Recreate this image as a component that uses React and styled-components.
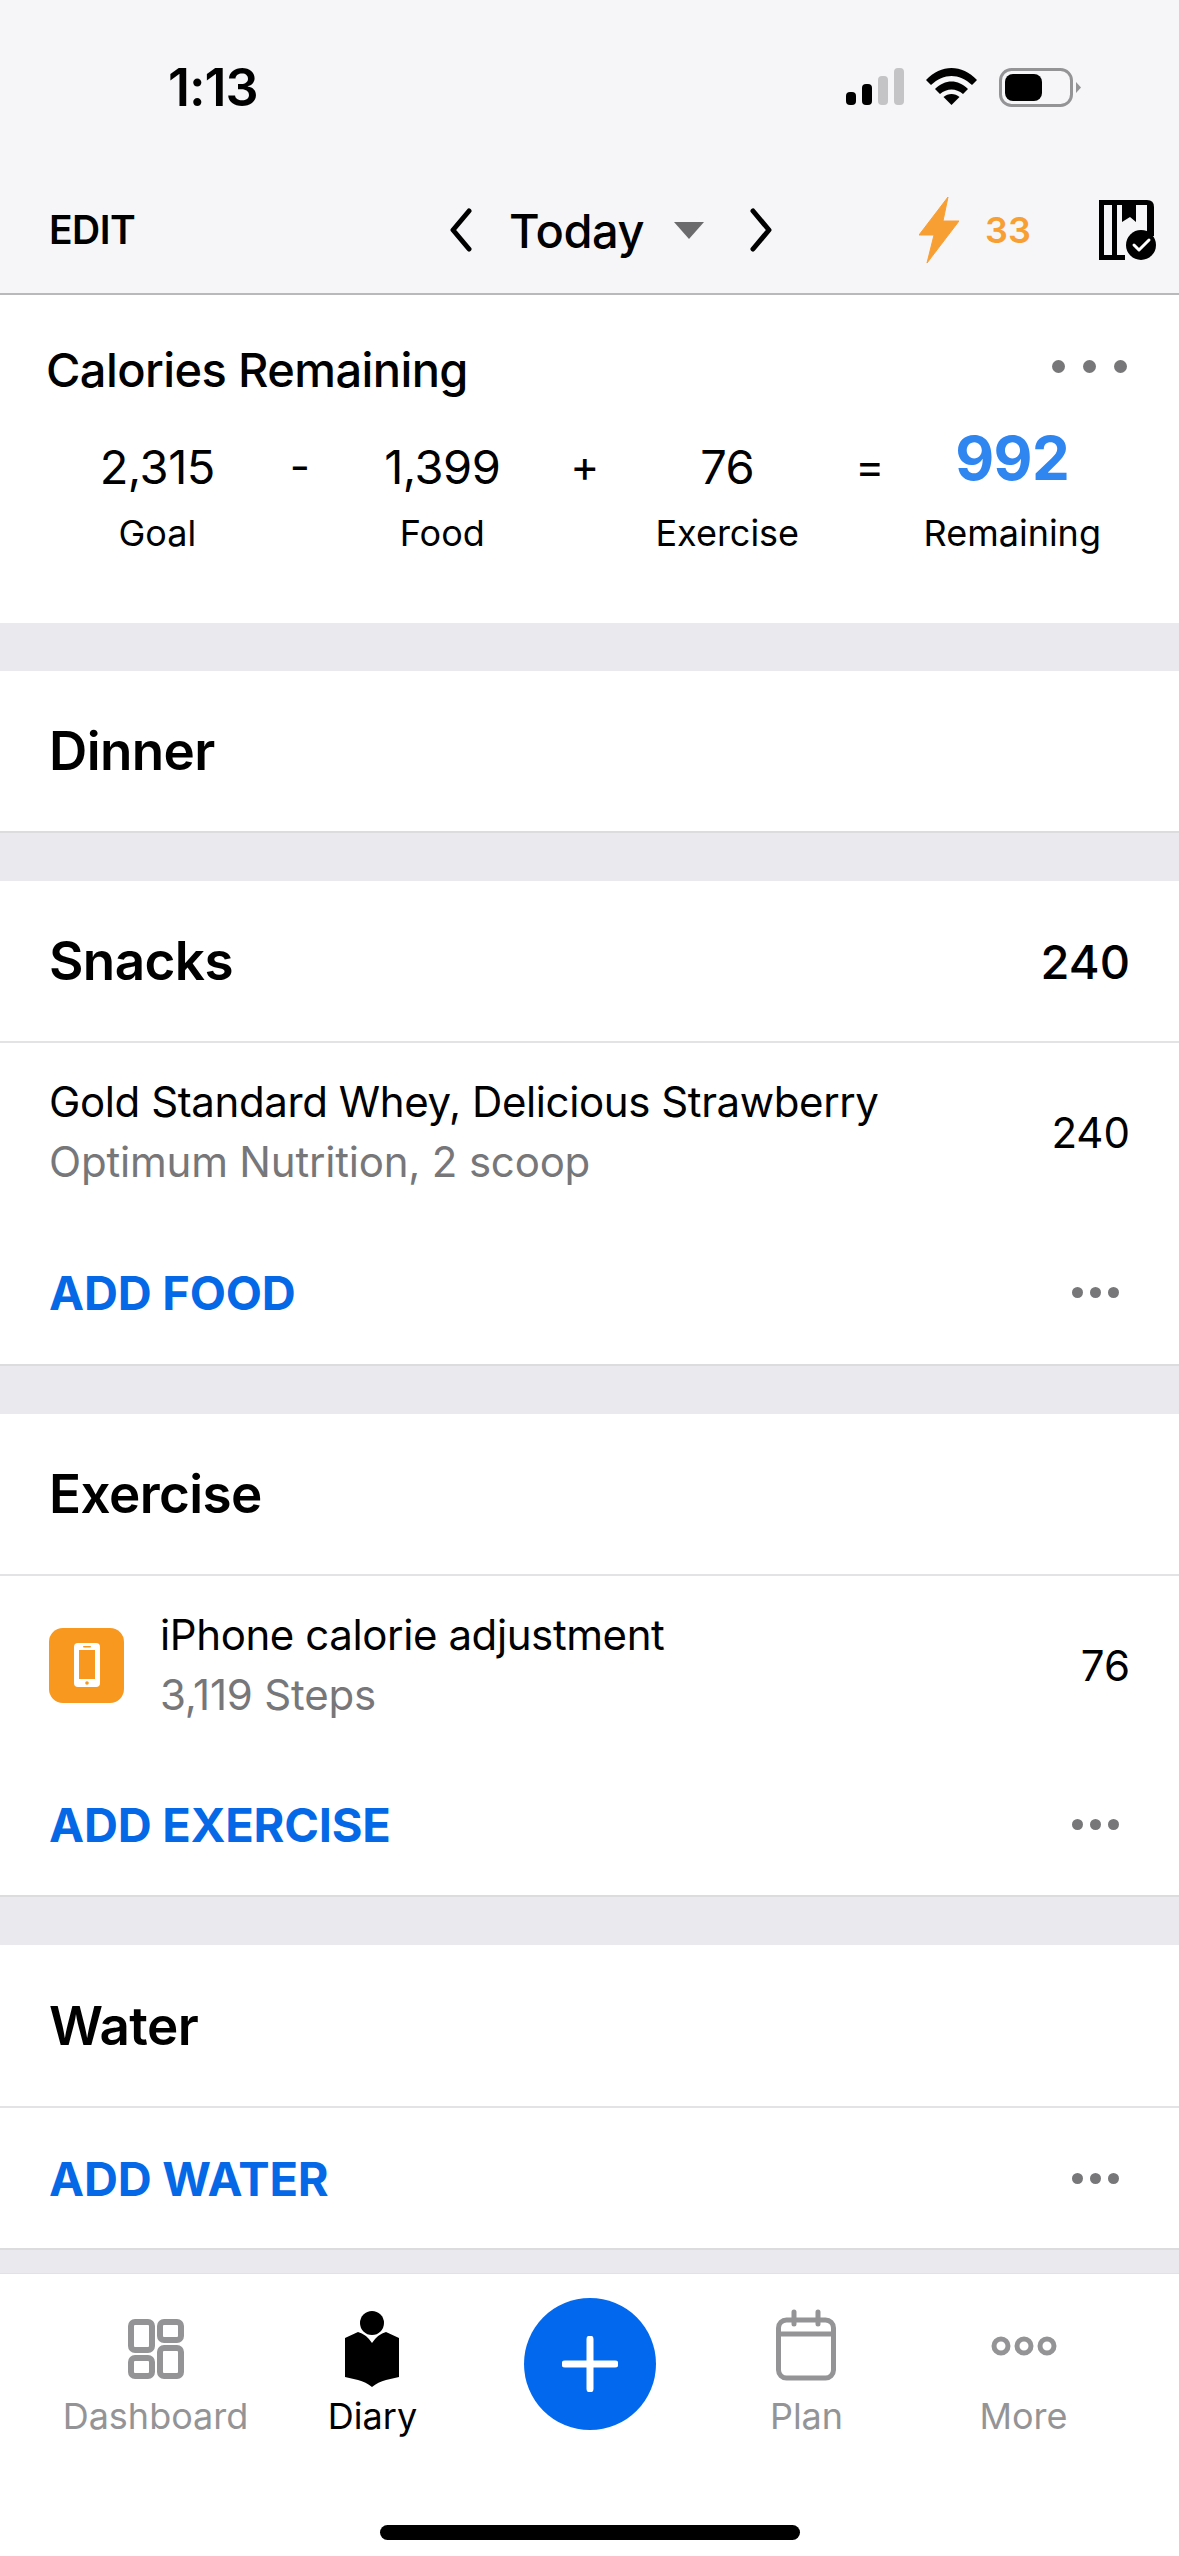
import React from 'react';
import styled, { createGlobalStyle } from 'styled-components';

const Global = createGlobalStyle`
  html, body { margin: 0; padding: 0; background: #fff; }
  body { font-family: Inter, "Liberation Sans", sans-serif; color: #000; }
  * { box-sizing: border-box; }
`;

const Screen = styled.div`
  width: 1179px;
  height: 2556px;
  display: flex;
  flex-direction: column;
  overflow: hidden;
  background: #e9e9ee;
`;

const Top = styled.header`
  height: 295px;
  flex: none;
  background: #f6f6f9;
  border-bottom: 2px solid #b9b9bc;
`;

const StatusBar = styled.div`
  height: 176px;
  padding: 60px 98px 0 168px;
  display: flex;
  justify-content: space-between;
  align-items: flex-start;
`;

const Clock = styled.div`
  font-size: 52px;
  line-height: 56px;
  font-weight: 600;
  letter-spacing: -1px;
`;

const StatusIcons = styled.div`
  display: flex;
  gap: 22px;
  padding-top: 8px;
`;

const NavBar = styled.div`
  height: 117px;
  display: grid;
  grid-template-columns: 400px 390px 1fr;
  align-items: start;
  padding-left: 49px;
`;

const Edit = styled.div`
  font-size: 39px;
  font-weight: 600;
  line-height: 108px;
  letter-spacing: -0.5px;
`;

const DatePicker = styled.div`
  display: flex;
  align-items: center;
  height: 108px;
`;

const Today = styled.div`
  font-size: 47px;
  font-weight: 500;
  margin: 0 30px 0 36px;
  letter-spacing: -0.5px;
`;

const Caret = styled.div`
  width: 0;
  height: 0;
  border-left: 15px solid transparent;
  border-right: 15px solid transparent;
  border-top: 17px solid #6b6b6e;
  margin-right: 45px;
`;

const Streak = styled.div`
  display: flex;
  align-items: center;
  height: 108px;
  margin-left: 80px;
`;

const StreakCount = styled.span`
  font-size: 36px;
  font-weight: 600;
  color: #f89f34;
  margin: 0 68px 0 26px;
`;

const Summary = styled.section`
  height: 328px;
  flex: none;
  background: #fff;
  padding-top: 46px;
`;

const SummaryHead = styled.div`
  display: flex;
  justify-content: space-between;
  padding: 0 52px 0 46px;
`;

const SummaryTitle = styled.h2`
  margin: 0;
  font-size: 47px;
  line-height: 58px;
  font-weight: 500;
  letter-spacing: -0.6px;
`;

const Dots = styled.div`
  display: flex;
  gap: ${p => p.$gap}px;
  align-items: center;
  height: ${p => p.$h}px;
  & > i {
    width: ${p => p.$size}px;
    height: ${p => p.$size}px;
    border-radius: 50%;
    background: #77777a;
  }
`;

const Equation = styled.div`
  margin-top: 28px;
  padding-left: 86px;
  display: grid;
  grid-template-columns: repeat(7, 142.5px);
  justify-items: center;
`;

const Term = styled.div`
  display: flex;
  flex-direction: column;
  align-items: center;
  white-space: nowrap;
`;

const TermValue = styled.div`
  height: 78px;
  display: flex;
  align-items: center;
  font-size: ${p => (p.$accent ? 60 : 47)}px;
  font-weight: ${p => (p.$accent ? 700 : 400)};
  color: ${p => (p.$accent ? '#2f86f1' : '#000')};
  letter-spacing: -0.5px;
  ${p => p.$accent && 'transform: translateY(-8px);'}
`;

const TermLabel = styled.div`
  font-size: 36px;
  line-height: 44px;
  margin-top: 6px;
`;

const Operator = styled.div`
  height: 78px;
  display: flex;
  align-items: center;
  font-size: 44px;
`;

const Card = styled.section`
  flex: none;
  background: #fff;
  margin-top: 48px;
  border-bottom: 2px solid #dcdcdf;
`;

const CardHead = styled.div`
  height: ${p => p.$h}px;
  padding: 0 49px;
  display: flex;
  justify-content: space-between;
  align-items: center;
  & + * { border-top: 2px solid #e3e3e6; }
`;

const CardTitle = styled.h3`
  margin: 0;
  font-size: 53px;
  font-weight: 600;
  letter-spacing: -0.6px;
`;

const CardTotal = styled.div`
  font-size: 47px;
  font-weight: 500;
`;

const Entry = styled.div`
  height: 180px;
  padding: 0 49px;
  display: flex;
  align-items: center;
  gap: 36px;
`;

const EntryText = styled.div`
  flex: 1;
  min-width: 0;
`;

const EntryName = styled.div`
  font-size: 42px;
  line-height: 60px;
  letter-spacing: -0.4px;
`;

const EntryDetail = styled.div`
  font-size: 42px;
  line-height: 60px;
  color: #77777a;
  letter-spacing: -0.2px;
`;

const EntryValue = styled.div`
  font-size: 42px;
`;

const AppBadge = styled.div`
  width: 75px;
  height: 75px;
  border-radius: 14px;
  background: #f8981f;
  display: flex;
  align-items: center;
  justify-content: center;
  flex: none;
`;

const CardAction = styled.div`
  height: ${p => p.$h}px;
  padding: 0 60px 0 49px;
  display: flex;
  justify-content: space-between;
  align-items: center;
`;

const AddLink = styled.div`
  font-size: 47px;
  font-weight: 700;
  color: #0568e6;
  letter-spacing: -0.2px;
`;

const Filler = styled.div`
  flex: 1;
`;

const TabBar = styled.nav`
  height: 283px;
  flex: none;
  background: #fff;
  display: flex;
  flex-direction: column;
  align-items: center;
  border-top: 1px solid #e2e2e5;
`;

const Tabs = styled.div`
  width: 100%;
  padding: 24px 47px 0;
  display: grid;
  grid-template-columns: repeat(5, 217px);
  justify-items: center;
`;

const Tab = styled.div`
  display: flex;
  flex-direction: column;
  align-items: center;
  font-size: 36px;
  line-height: 44px;
  color: ${p => (p.$active ? '#000' : '#949497')};
  & > svg { display: block; height: 96px; margin-bottom: 0; }
`;

const AddButton = styled.div`
  width: 132px;
  height: 132px;
  border-radius: 50%;
  background: #0268ee;
  display: flex;
  align-items: center;
  justify-content: center;
`;

const HomeIndicator = styled.div`
  width: 420px;
  height: 15px;
  border-radius: 8px;
  background: #000;
  margin-top: 87px;
`;

const Signal = () => (
  <svg width="58" height="37" viewBox="0 0 58 37">
    <rect x="0" y="24" width="10" height="13" rx="4" fill="#000" />
    <rect x="16" y="16" width="10" height="21" rx="4" fill="#000" />
    <rect x="32" y="8" width="10" height="29" rx="4" fill="#c4c4c7" />
    <rect x="48" y="0" width="10" height="37" rx="4" fill="#c4c4c7" />
  </svg>
);

const Wifi = () => (
  <svg width="51" height="37" viewBox="0 0 51 37">
    <path d="M0 12 C15 -4 36 -4 51 12 L46 17 C33 5 18 5 5 17 Z" fill="#000" />
    <path d="M9 21 C19 11 32 11 42 21 L37 26 C30 20 21 20 14 26 Z" fill="#000" />
    <path d="M17.5 29 C22 25 29 25 33.5 29 L25.5 37 Z" fill="#000" />
  </svg>
);

const Battery = () => (
  <svg width="82" height="39" viewBox="0 0 82 39">
    <rect x="1.5" y="1.5" width="71" height="36" rx="11" fill="none" stroke="#949497" strokeWidth="3" />
    <rect x="6" y="6" width="37" height="27" rx="8" fill="#000" />
    <path d="M77 14 L82 19.5 L77 25 Z" fill="#949497" />
  </svg>
);

const Chevron = ({ left }) => (
  <svg width="24" height="44" viewBox="0 0 24 44" fill="none" stroke="#000" strokeWidth="5" strokeLinecap="round" strokeLinejoin="round">
    <path d={left ? 'M20 3 L4 22 L20 41' : 'M4 3 L20 22 L4 41'} />
  </svg>
);

const Bolt = () => (
  <svg width="40" height="66" viewBox="0 0 40 66">
    <path d="M29 0 L0 38 L15 38 L8 66 L40 24 L24 24 Z" fill="#f89f34" stroke="#f89f34" strokeWidth="1" strokeLinejoin="round" />
  </svg>
);

const PlanCheck = () => (
  <svg width="58" height="60" viewBox="0 0 58 60">
    <path fillRule="evenodd" d="M0 0 H48 Q55 0 55 7 V36 H48 V5 H37 V22 L31 17 L23 22 V5 H18 V55 H26 V60 H0 Z M5 5 V55 H13 V5 Z" fill="#000" />
    <circle cx="42" cy="45" r="15" fill="#000" />
    <path d="M35 45 L40 50 L50 40" fill="none" stroke="#fff" strokeWidth="3" strokeLinecap="round" strokeLinejoin="round" />
  </svg>
);

const PhoneGlyph = () => (
  <svg width="26" height="44" viewBox="0 0 26 44">
    <rect width="26" height="44" rx="4" fill="#fff" />
    <rect x="5" y="7" width="16" height="29" fill="#f8981f" />
    <rect x="9" y="3" width="8" height="1.6" rx="0.8" fill="#f8981f" />
    <circle cx="13" cy="40" r="1.8" fill="#f8981f" />
  </svg>
);

const DashboardIcon = () => (
  <svg width="56" viewBox="0 0 56 96" fill="none" stroke="#949497" strokeWidth="6">
    <rect x="3" y="24" width="21" height="28" rx="4" />
    <rect x="32" y="24" width="21" height="18" rx="4" />
    <rect x="3" y="60" width="21" height="18" rx="4" />
    <rect x="32" y="50" width="21" height="28" rx="4" />
  </svg>
);

const DiaryIcon = () => (
  <svg width="56" viewBox="0 0 56 96">
    <ellipse cx="28" cy="25" rx="12" ry="12" fill="#000" />
    <path d="M1 40 L14 34 Q22 36 28 45 Q34 36 42 34 L55 40 V79 L42 82 Q34 84 28 89 Q22 84 14 82 L1 79 Z" fill="#000" />
  </svg>
);

const PlanIcon = () => (
  <svg width="60" viewBox="0 0 60 96" fill="none" stroke="#949497" strokeWidth="5">
    <rect x="2.5" y="22" width="55" height="58" rx="8" />
    <path d="M2.5 36 H57.5" />
    <path d="M18 14 V26 M42 14 V26" strokeLinecap="round" />
  </svg>
);

const MoreIcon = () => (
  <svg width="66" viewBox="0 0 66 96" fill="none" stroke="#949497" strokeWidth="5">
    <circle cx="10" cy="48" r="7" />
    <circle cx="33" cy="48" r="7" />
    <circle cx="56" cy="48" r="7" />
  </svg>
);

const Plus = () => (
  <svg width="56" height="56" viewBox="0 0 56 56" stroke="#fff" strokeWidth="7" strokeLinecap="round">
    <path d="M28 3 V53 M3 28 H53" />
  </svg>
);

const RowDots = () => (
  <Dots $gap={7} $size={11} $h={20}><i /><i /><i /></Dots>
);

const terms = [
  { value: '2,315', label: 'Goal' },
  { op: '-' },
  { value: '1,399', label: 'Food' },
  { op: '+' },
  { value: '76', label: 'Exercise' },
  { op: '=' },
  { value: '992', label: 'Remaining', accent: true },
];

export default function App() {
  return (
    <Screen>
      <Global />
      <Top>
        <StatusBar>
          <Clock>1:13</Clock>
          <StatusIcons>
            <Signal />
            <Wifi />
            <Battery />
          </StatusIcons>
        </StatusBar>
        <NavBar>
          <Edit>EDIT</Edit>
          <DatePicker>
            <Chevron left />
            <Today>Today</Today>
            <Caret />
            <Chevron />
          </DatePicker>
          <Streak>
            <Bolt />
            <StreakCount>33</StreakCount>
            <PlanCheck />
          </Streak>
        </NavBar>
      </Top>

      <Summary>
        <SummaryHead>
          <SummaryTitle>Calories Remaining</SummaryTitle>
          <Dots $gap={18} $size={13} $h={50}><i /><i /><i /></Dots>
        </SummaryHead>
        <Equation>
          {terms.map((t, i) =>
            t.op ? (
              <Operator key={i}>{t.op}</Operator>
            ) : (
              <Term key={i}>
                <TermValue $accent={t.accent}>{t.value}</TermValue>
                <TermLabel>{t.label}</TermLabel>
              </Term>
            )
          )}
        </Equation>
      </Summary>

      <Card>
        <CardHead $h={160}><CardTitle>Dinner</CardTitle></CardHead>
      </Card>

      <Card>
        <CardHead $h={160}>
          <CardTitle>Snacks</CardTitle>
          <CardTotal>240</CardTotal>
        </CardHead>
        <Entry>
          <EntryText>
            <EntryName>Gold Standard Whey, Delicious Strawberry</EntryName>
            <EntryDetail>Optimum Nutrition, 2 scoop</EntryDetail>
          </EntryText>
          <EntryValue>240</EntryValue>
        </Entry>
        <CardAction $h={143}>
          <AddLink>ADD FOOD</AddLink>
          <RowDots />
        </CardAction>
      </Card>

      <Card>
        <CardHead $h={160}><CardTitle>Exercise</CardTitle></CardHead>
        <Entry>
          <AppBadge><PhoneGlyph /></AppBadge>
          <EntryText>
            <EntryName>iPhone calorie adjustment</EntryName>
            <EntryDetail>3,119 Steps</EntryDetail>
          </EntryText>
          <EntryValue>76</EntryValue>
        </Entry>
        <CardAction $h={141}>
          <AddLink>ADD EXERCISE</AddLink>
          <RowDots />
        </CardAction>
      </Card>

      <Card>
        <CardHead $h={161}><CardTitle>Water</CardTitle></CardHead>
        <CardAction $h={142}>
          <AddLink>ADD WATER</AddLink>
          <RowDots />
        </CardAction>
      </Card>

      <Filler />

      <TabBar>
        <Tabs>
          <Tab><DashboardIcon />Dashboard</Tab>
          <Tab $active><DiaryIcon />Diary</Tab>
          <AddButton><Plus /></AddButton>
          <Tab><PlanIcon />Plan</Tab>
          <Tab><MoreIcon />More</Tab>
        </Tabs>
        <HomeIndicator />
      </TabBar>
    </Screen>
  );
}
